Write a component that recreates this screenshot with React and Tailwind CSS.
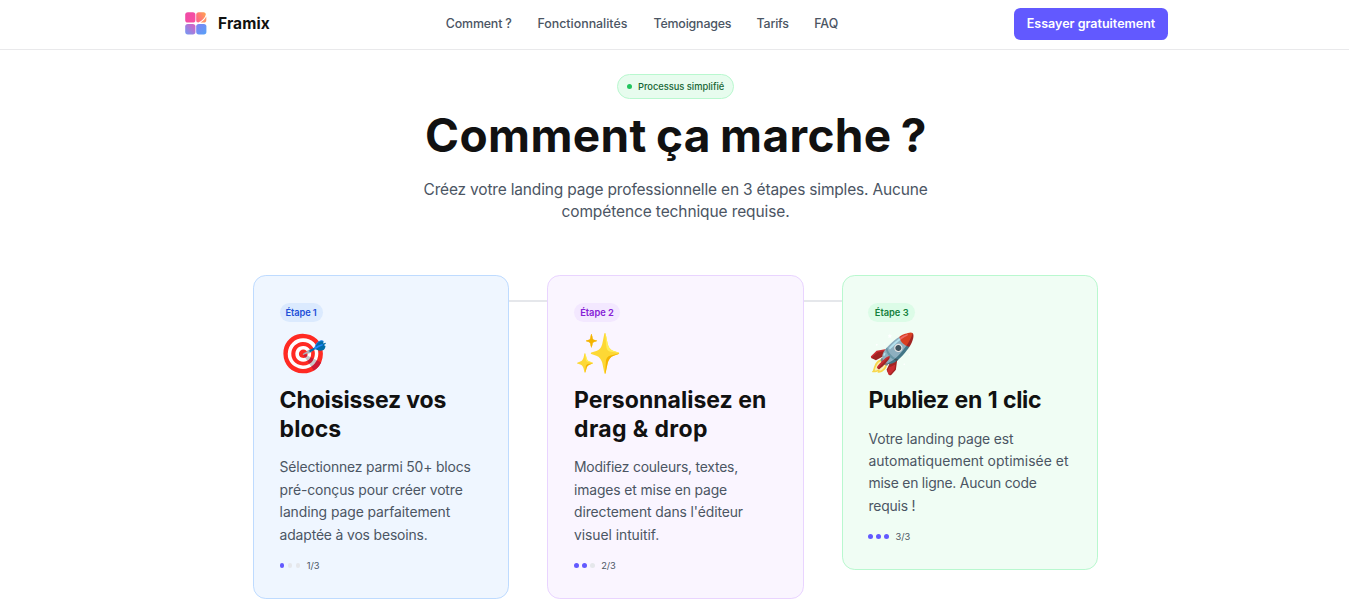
import React from 'react';

const navItems = [
  { label: 'Comment ?', cls: 'w-[66px] tracking-[-0.16px]' },
  { label: 'Fonctionnalités', cls: 'w-[90.5px]' },
  { label: 'Témoignages', cls: 'w-[77.5px] tracking-[-0.18px]' },
  { label: 'Tarifs', cls: 'w-[32px] tracking-[-0.2px]' },
  { label: 'FAQ', cls: 'w-[24px]' },
];

const steps = [
  {
    n: 1,
    emoji: '🎯',
    card: 'bg-[#eff6ff] border-[#bedbff]',
    tag: 'bg-[#dbeafe] text-[#1d4fd8] tracking-[-0.13px] w-[43px]',
    title: [
      ['Choisissez vos', 'tracking-[-0.15px]'],
      ['blocs', 'tracking-[0.1px]'],
    ],
    text: [
      ['Sélectionnez parmi 50+ blocs', 'tracking-[-0.165px]'],
      ['pré-conçus pour créer votre', 'tracking-[-0.1px]'],
      ['landing page parfaitement', 'tracking-[-0.07px]'],
      ['adaptée à vos besoins.', 'tracking-[-0.14px]'],
    ],
  },
  {
    n: 2,
    emoji: '✨',
    card: 'bg-[#faf5ff] border-[#e9d4ff]',
    tag: 'bg-[#f3e8ff] text-[#8520d6] w-[46px]',
    title: [
      ['Personnalisez en', 'tracking-[0.02px]'],
      ['drag & drop', 'tracking-[0.38px]'],
    ],
    text: [
      ['Modifiez couleurs, textes,', 'tracking-[-0.2px]'],
      ['images et mise en page', 'tracking-[-0.13px]'],
      ["directement dans l'éditeur", 'tracking-[-0.09px]'],
      ['visuel intuitif.', 'tracking-[-0.06px]'],
    ],
  },
  {
    n: 3,
    emoji: '🚀',
    card: 'bg-[#f0fdf4] border-[#b9f8cf]',
    tag: 'bg-[#dcfce7] text-[#15803d] w-[46.5px]',
    title: [['Publiez en 1 clic', 'tracking-[-0.32px] [word-spacing:0.6px]']],
    text: [
      ['Votre landing page est', 'tracking-[-0.115px]'],
      ['automatiquement optimisée et', 'tracking-[0.05px]'],
      ['mise en ligne. Aucun code', 'tracking-[-0.21px]'],
      ['requis !', 'tracking-[-0.18px]'],
    ],
  },
];

function Logo() {
  return (
    <svg className="mb-[2px] h-[23px] w-[22px] shrink-0" viewBox="0 0 22 23">
      <defs>
        <linearGradient id="tl" x1="0" y1="0" x2="1" y2="1">
          <stop offset="0" stopColor="#ee4ba6" />
          <stop offset="1" stopColor="#f94fa2" />
        </linearGradient>
        <linearGradient id="tr" x1="0" y1="0.6" x2="1" y2="0">
          <stop offset="0" stopColor="#ff6587" />
          <stop offset="1" stopColor="#ffa64d" />
        </linearGradient>
        <linearGradient id="bl" x1="0" y1="1" x2="1" y2="0">
          <stop offset="0" stopColor="#6f9bf5" />
          <stop offset="1" stopColor="#e05cc0" />
        </linearGradient>
        <linearGradient id="br" x1="0" y1="0" x2="1" y2="1">
          <stop offset="0" stopColor="#8480f2" />
          <stop offset="1" stopColor="#55a3f8" />
        </linearGradient>
      </defs>
      <rect x="0.2" y="0.2" width="10.2" height="10.4" rx="2.6" fill="url(#tl)" />
      <path d="M13.8 .2h4.8a2.6 2.6 0 0 1 2.3 1.7c-.6 3.7-3.7 6.7-7.600 8.700a2.200 2.200 0 0 1-2.100-2.400V2.800A2.600 2.600 0 0 1 13.800 .2Z" fill="url(#tr)" />
      <path d="M21.3 4.600v3.400a2.600 2.600 0 0 1-2.600 2.600h-3.200c2.600-1.500 4.600-3.300 5.800-6Z" fill="#ff9166" />
      <rect x="0.2" y="12" width="10.2" height="10.4" rx="2.6" fill="url(#bl)" />
      <rect x="11.2" y="12" width="10.2" height="10.4" rx="2.6" fill="url(#br)" />
    </svg>
  );
}

function StepCard({ step }) {
  return (
    <article className={`relative rounded-[12.8px] border px-[25.6px] pt-[27px] pb-[26.4px] ${step.card}`}>
      <div className={`flex h-[19px] items-center justify-center rounded-full text-[9.3px] font-semibold leading-none ${step.tag}`}>
        Étape {step.n}
      </div>
      <div className="mt-[8px] h-[48px] font-['Noto_Color_Emoji'] text-[38.8px] leading-[48px]">{step.emoji}</div>
      <h3 className="mt-[8px] text-[23px] font-bold leading-[28.8px] text-[#111111]">
        {step.title.map(([line, cls]) => (
          <span key={line} className={`block whitespace-nowrap ${cls}`}>{line}</span>
        ))}
      </h3>
      <p className="mt-[12.5px] text-[13.9px] leading-[22.4px] text-[#4b5563]">
        {step.text.map(([line, cls]) => (
          <span key={line} className={`block whitespace-nowrap ${cls}`}>{line}</span>
        ))}
      </p>
      <div className="mt-[12.8px] flex h-[12.8px] items-center gap-[3.2px]">
        {[1, 2, 3].map((i) => (
          <span key={i} className={`size-[4.8px] rounded-full ${i <= step.n ? 'bg-[#6259ff]' : 'bg-[#e5e7eb]'}`} />
        ))}
        <span className="ml-[3.2px] text-[9.3px] leading-none tracking-[-0.1px] text-[#4b5563]">{step.n}/3</span>
      </div>
    </article>
  );
}

export default function App() {
  return (
    <div className="h-[611px] overflow-hidden bg-white font-['Inter',sans-serif] text-[#111111]">
      <header className="h-[50px] border-b border-[#e9e9eb]">
        <div className="mx-auto flex h-[48px] w-[987px] items-center justify-between">
          <div className="flex w-[89px] items-center gap-[11px] pl-[4px]">
            <Logo />
            <span className="text-[15.5px] font-bold leading-none tracking-[0.1px]">Framix</span>
          </div>
          <nav className="flex items-center gap-[25.6px] text-[12.4px] font-medium text-[#4b5563]">
            {navItems.map((item) => (
              <a key={item.label} className={`whitespace-nowrap ${item.cls}`}>{item.label}</a>
            ))}
          </nav>
          <button className="h-8 w-[154px] rounded-[6.4px] bg-[#6259ff] text-[12.5px] font-semibold text-white">
            Essayer gratuitement
          </button>
        </div>
      </header>

      <main className="flex flex-col items-center pt-[24px] pl-[2px]">
        <div className="flex h-[25px] w-[117px] items-center justify-center gap-[6.4px] rounded-full border border-[#b9f8cf] bg-[#e7fcee]">
          <span className="size-[4.8px] rounded-full bg-[#22c55e]" />
          <span className="whitespace-nowrap text-[9.3px] font-medium leading-none text-[#166534]">Processus simplifié</span>
        </div>
        <h1 className="mt-[12px] pl-px text-[46px] font-bold leading-[48px] tracking-[0.35px] [word-spacing:-2px]">Comment ça marche ?</h1>
        <p className="mt-[20px] text-center text-[15.5px] leading-[22.4px] text-[#4b5563]">
          <span className="block tracking-[-0.18px]">Créez votre landing page professionnelle en 3 étapes simples. Aucune</span>
          <span className="block tracking-[-0.11px]">compétence technique requise.</span>
        </p>

        <section className="relative mt-[51.5px] grid w-[845px] grid-cols-3 items-start gap-[38.3px]">
          <div className="absolute top-[25px] left-[128px] h-[2px] w-[589px] bg-[#e5e7eb]" />
          {steps.map((step) => (
            <StepCard key={step.n} step={step} />
          ))}
        </section>
      </main>
    </div>
  );
}
